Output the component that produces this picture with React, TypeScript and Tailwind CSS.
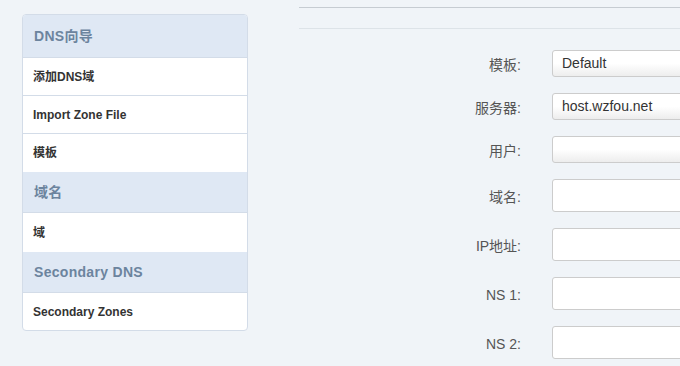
const sans = "font-['Liberation_Sans','Noto_Sans_CJK_SC',sans-serif]";

type NavEntry = { kind: 'header' | 'item'; label: string; h: string; border?: boolean };

const nav: NavEntry[] = [
  { kind: 'header', label: 'DNS向导', h: 'h-[43px]', border: true },
  { kind: 'item', label: '添加DNS域', h: 'h-[38px]', border: true },
  { kind: 'item', label: 'Import Zone File', h: 'h-[38px]', border: true },
  { kind: 'item', label: '模板', h: 'h-[38px]' },
  { kind: 'header', label: '域名', h: 'h-[41px]', border: true },
  { kind: 'item', label: '域', h: 'h-[39px]' },
  { kind: 'header', label: 'Secondary DNS', h: 'h-[41px]', border: true },
  { kind: 'item', label: 'Secondary Zones', h: 'h-[37px]' },
];

const fields = [
  { label: '模板:', value: 'Default', select: true },
  { label: '服务器:', value: 'host.wzfou.net', select: true },
  { label: '用户:', value: '', select: true },
  { label: '域名:', value: '', select: false },
  { label: 'IP地址:', value: '', select: false },
  { label: 'NS 1:', value: '', select: false },
  { label: 'NS 2:', value: '', select: false },
];

function Sidebar() {
  return (
    <div className="ml-[22px] mt-[14px] w-[226px] shrink-0 self-start rounded-[4px] border border-[#d3dce8] bg-white overflow-hidden">
      {nav.map((n, i) =>
        n.kind === 'header' ? (
          <div
            key={i}
            className={`${n.h} flex items-center px-[11px] bg-[#dfe8f4] text-[14px] font-bold text-[#6c849e] tracking-[0.3px] ${n.border ? 'border-b border-[#d3dce8]' : ''}`}
          >
            {n.label}
          </div>
        ) : (
          <div
            key={i}
            className={`${n.h} flex items-center px-[10px] text-[12px] font-bold text-[#333] ${n.border ? 'border-b border-[#d3dce8]' : ''}`}
          >
            {n.label}
          </div>
        )
      )}
    </div>
  );
}

function Field({ label, value, select }: { label: string; value: string; select: boolean }) {
  return (
    <div className="flex items-center">
      <div className="w-[222px] pt-[4px] text-right text-[14px] text-[#555]">{label}</div>
      <div
        className={`ml-[31px] flex-1 flex items-center px-[9px] rounded-[3px] border border-[#ccc] text-[14px] text-[#333] ${
          select ? 'h-[27px] bg-gradient-to-b from-white via-white to-[#ededed]' : 'h-[33px] bg-white'
        }`}
      >
        {value}
      </div>
    </div>
  );
}

export default function App() {
  return (
    <div className={`${sans} w-[680px] h-[366px] overflow-hidden bg-[#f0f4f8] flex`}>
      <Sidebar />
      <div className="ml-[51px] flex-1 flex flex-col">
        <div className="mt-[7px] h-[22px] border-t border-b border-t-[#c6ccd2] border-b-[#dde3e8]" />
        <div className="mt-[21px] flex flex-col gap-4 mr-[-40px]">
          {fields.map((f) => (
            <Field key={f.label} {...f} />
          ))}
        </div>
      </div>
    </div>
  );
}
